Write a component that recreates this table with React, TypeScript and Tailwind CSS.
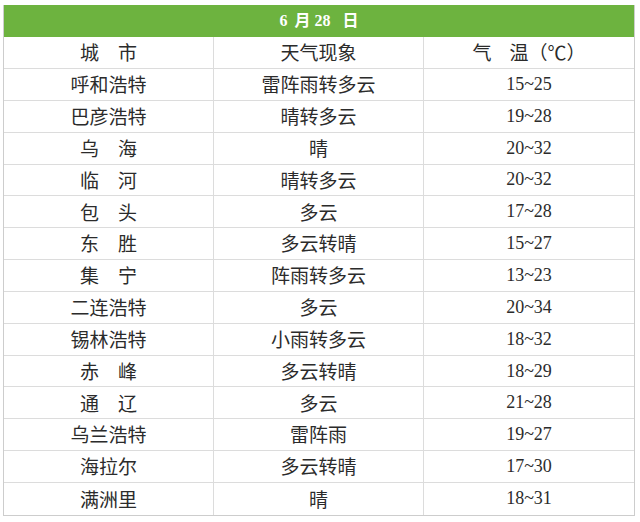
const rows = [
  { city: '呼和浩特', weather: '雷阵雨转多云', temp: '15~25' },
  { city: '巴彦浩特', weather: '晴转多云', temp: '19~28' },
  { city: '乌　海', weather: '晴', temp: '20~32' },
  { city: '临　河', weather: '晴转多云', temp: '20~32' },
  { city: '包　头', weather: '多云', temp: '17~28' },
  { city: '东　胜', weather: '多云转晴', temp: '15~27' },
  { city: '集　宁', weather: '阵雨转多云', temp: '13~23' },
  { city: '二连浩特', weather: '多云', temp: '20~34' },
  { city: '锡林浩特', weather: '小雨转多云', temp: '18~32' },
  { city: '赤　峰', weather: '多云转晴', temp: '18~29' },
  { city: '通　辽', weather: '多云', temp: '21~28' },
  { city: '乌兰浩特', weather: '雷阵雨', temp: '19~27' },
  { city: '海拉尔', weather: '多云转晴', temp: '17~30' },
  { city: '满洲里', weather: '晴', temp: '18~31' },
];

const cjk = "font-['Noto_Sans_CJK_SC',sans-serif]";
const serif = "font-['Liberation_Serif','Noto_Sans_CJK_SC',serif]";

export default function App() {
  return (
    <div className="w-[640px] h-[522px] bg-white pt-[5px] pl-[3px]">
      <div className="w-[632px] border-x border-b border-[#cdcdcd] text-[#2b2b2b]">
        {/* Title */}
        <div
          className={`h-[32px] bg-[#6db33f] flex items-center justify-center text-white font-bold text-[16px] ${serif}`}
        >
          <span>6</span>
          <span className="ml-[7px]">月</span>
          <span className="ml-[4px]">28</span>
          <span className="ml-[12px]">日</span>
        </div>

        {/* Header row */}
        <div className="grid grid-cols-3 h-[32px] border-b border-[#dcdcdc] text-[19px]">
          <div className={`flex items-center justify-center border-r border-[#dcdcdc] ${cjk}`}>城　市</div>
          <div className={`flex items-center justify-center border-r border-[#dcdcdc] ${cjk}`}>天气现象</div>
          <div className={`flex items-center justify-center ${cjk}`}>
            气<span className="ml-[18px]">温（℃）</span>
          </div>
        </div>

        {rows.map((r, i) => (
          <div
            key={r.city}
            className={`grid grid-cols-3 h-[31.85px] ${i < rows.length - 1 ? 'border-b border-[#dcdcdc]' : ''}`}
          >
            <div className={`flex items-center justify-center border-r border-[#dcdcdc] text-[19px] ${cjk}`}>
              {r.city}
            </div>
            <div className={`flex items-center justify-center border-r border-[#dcdcdc] text-[19px] ${cjk}`}>
              {r.weather}
            </div>
            <div className={`flex items-center justify-center text-[18px] ${serif}`}>{r.temp}</div>
          </div>
        ))}
      </div>
    </div>
  );
}
